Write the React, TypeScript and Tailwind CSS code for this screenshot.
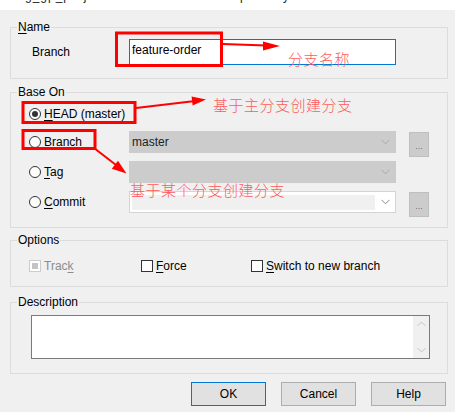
import React from "react";

const ui = { fontFamily: '"Liberation Sans", Arial, sans-serif' };
const cjk = { fontFamily: '"Noto Sans CJK SC", sans-serif' };

function Ul({ children }: { children: React.ReactNode }) {
  return <span className="underline underline-offset-2">{children}</span>;
}

function Chevron({ color = "#a8a8a8" }: { color?: string }) {
  return (
    <svg width="9" height="6" viewBox="0 0 9 6" className="shrink-0">
      <path d="M0.5 0.8 L4.5 4.8 L8.5 0.8" fill="none" stroke={color} strokeWidth="1" />
    </svg>
  );
}

function Radio({ checked = false }: { checked?: boolean }) {
  return (
    <span className="w-[12px] h-[12px] rounded-full border border-[#333333] bg-white flex items-center justify-center shrink-0">
      {checked && <span className="w-[6px] h-[6px] rounded-full bg-[#333333]" />}
    </span>
  );
}

function Check({ disabled = false }: { disabled?: boolean }) {
  return (
    <span
      className={`w-[12px] h-[12px] border bg-white flex items-center justify-center shrink-0 ${
        disabled ? "border-[#cccccc]" : "border-[#333333]"
      }`}
    >
      {disabled && <span className="w-[6px] h-[6px] bg-[#c4c4c4]" />}
    </span>
  );
}

function Dots() {
  return (
    <div className="ml-[13px] self-start mt-[1px] w-[20px] h-[25px] bg-[#cccccc] border border-[#bfbfbf] flex items-end justify-center pb-[6px]">
      <span className="text-[9px] leading-[8px] text-[#707070]">...</span>
    </div>
  );
}

function Group({ title, className = "", children }: { title: React.ReactNode; className?: string; children: React.ReactNode }) {
  return (
    <fieldset className={`border border-[#dcdcdc] px-[6px] ${className}`}>
      <legend className="px-[1px] leading-[16px]">{title}</legend>
      {children}
    </fieldset>
  );
}

export default function App() {
  return (
    <div className="relative w-[455px] h-[412px] overflow-hidden bg-[#f0f0f0] text-[12px] text-black" style={ui}>
      {/* title bar, cut off at the top */}
      <div className="h-[10px] bg-white overflow-hidden">
        <div className="-mt-[10px] pl-[8px] leading-[12px] text-[12px] text-[#222] whitespace-nowrap tracking-[1px]">
          ‹ ng_gp_project - Create branch - Repository - TortoiseGit
        </div>
      </div>

      <div className="pl-[10px] pr-[7px]">
        <Group title={<><Ul>N</Ul>ame</>} className="mt-[9px] pb-[13px]">
          <div className="pt-[4px] flex items-center">
            <span className="ml-[15px] w-[97px]">Branch</span>
            <div className="w-[267px] h-[26px] bg-white border border-[#0078d7] pl-[2px] pt-[2px] leading-[16px]">
              feature-order
            </div>
          </div>
        </Group>

        <Group title="Base On" className="mt-[5px] pb-[14px]">
          <div className="pt-[3px] flex flex-col">
            <div className="h-[22px] flex items-center ml-[12px] gap-[3px]">
              <Radio checked />
              <span>
                <Ul>H</Ul>EAD (master)
              </span>
            </div>

            <div className="mt-[6px] h-[22px] flex">
              <div className="ml-[12px] w-[100px] flex items-center gap-[3px]">
                <Radio />
                <span>
                  <Ul>B</Ul>ranch
                </span>
              </div>
              <div className="w-[267px] h-[22px] bg-[#cccccc] border border-[#cccccc] flex items-center pl-[2px] pr-[5px]">
                <span className="flex-1 text-[#222]">master</span>
                <Chevron />
              </div>
              <Dots />
            </div>

            <div className="mt-[8px] h-[22px] flex">
              <div className="ml-[12px] w-[100px] flex items-center gap-[3px]">
                <Radio />
                <span>
                  <Ul>T</Ul>ag
                </span>
              </div>
              <div className="w-[267px] h-[22px] bg-[#cccccc] border border-[#cccccc] flex items-center justify-end pr-[5px]">
                <Chevron />
              </div>
            </div>

            <div className="mt-[8px] h-[22px] flex">
              <div className="ml-[12px] w-[100px] flex items-center gap-[3px]">
                <Radio />
                <span>
                  <Ul>C</Ul>ommit
                </span>
              </div>
              <div className="w-[267px] h-[22px] bg-white border border-[#d4d4d4] flex items-center pl-[2px] pr-[5px] gap-[6px]">
                <div className="w-[245px] h-[15px] bg-[#f0f0f0]" />
                <Chevron color="#8a8a8a" />
              </div>
              <Dots />
            </div>
          </div>
        </Group>

        <Group title="Options" className="mt-[4px] pb-[12px]">
          <div className="pt-[10px] h-[26px] flex items-center">
            <div className="ml-[12px] w-[112px] flex items-center gap-[3px] text-[#8c8c8c]">
              <Check disabled />
              <span>
                Trac<Ul>k</Ul>
              </span>
            </div>
            <div className="w-[110px] flex items-center gap-[3px]">
              <Check />
              <span>
                <Ul>F</Ul>orce
              </span>
            </div>
            <div className="flex items-center gap-[3px]">
              <Check />
              <span>
                <Ul>S</Ul>witch to new branch
              </span>
            </div>
          </div>
        </Group>

        <Group title="Description" className="mt-[7px] pb-[14px]">
          <div className="pt-[5px]">
            <div className="ml-[14px] w-[399px] h-[44px] bg-white border border-[#7a7a7a] flex justify-end">
              <div className="w-[16px] bg-[#f0f0f0] flex flex-col items-center justify-between py-[5px]">
                <svg width="9" height="6" viewBox="0 0 9 6">
                  <path d="M0.5 5 L4.5 1 L8.5 5" fill="none" stroke="#c4c4c4" strokeWidth="1" />
                </svg>
                <svg width="9" height="6" viewBox="0 0 9 6">
                  <path d="M0.5 1 L4.5 5 L8.5 1" fill="none" stroke="#c4c4c4" strokeWidth="1" />
                </svg>
              </div>
            </div>
          </div>
        </Group>

        <div className="mt-[8px] mr-[2px] flex justify-end gap-[15px]">
          <button className="w-[75px] h-[24px] bg-[#e1e1e1] border border-[#0078d7]">OK</button>
          <button className="w-[75px] h-[24px] bg-[#e1e1e1] border border-[#adadad]">Cancel</button>
          <button className="w-[75px] h-[24px] bg-[#e1e1e1] border border-[#adadad]">Help</button>
        </div>
      </div>

      {/* red annotations drawn over the dialog */}
      <svg className="absolute inset-0 pointer-events-none" width="455" height="412" viewBox="0 0 455 412">
        <g fill="none" stroke="#ff0000" strokeWidth="3">
          <rect x="116.5" y="33" width="105" height="32.5" />
          <rect x="23" y="102.5" width="112" height="20" />
          <rect x="23" y="130.5" width="72" height="18" />
        </g>
        <g stroke="#ff0000" strokeWidth="2">
          <line x1="223" y1="44" x2="266" y2="45.6" />
          <line x1="136" y1="108" x2="193" y2="101.3" />
          <line x1="94" y1="148" x2="116" y2="165" />
        </g>
        <g fill="#ff0000">
          <polygon points="280,46 263,41.5 263,50.5" />
          <polygon points="206,99.5 191.6,96.6 192.6,105.6" />
          <polygon points="126.5,173.5 111.8,168.7 118,160.7" />
        </g>
      </svg>
      <div className="absolute left-[288px] top-[51px] text-[15px] leading-[15px] tracking-[0.5px] font-light text-[#ff5a5a]" style={cjk}>
        分支名称
      </div>
      <div className="absolute left-[213px] top-[97px] text-[15px] leading-[15px] tracking-[0.5px] font-light text-[#ff5a5a]" style={cjk}>
        基于主分支创建分支
      </div>
      <div className="absolute left-[130px] top-[182px] text-[15px] leading-[15px] tracking-[0.5px] font-light text-[#ff5a5a]" style={cjk}>
        基于某个分支创建分支
      </div>
    </div>
  );
}
